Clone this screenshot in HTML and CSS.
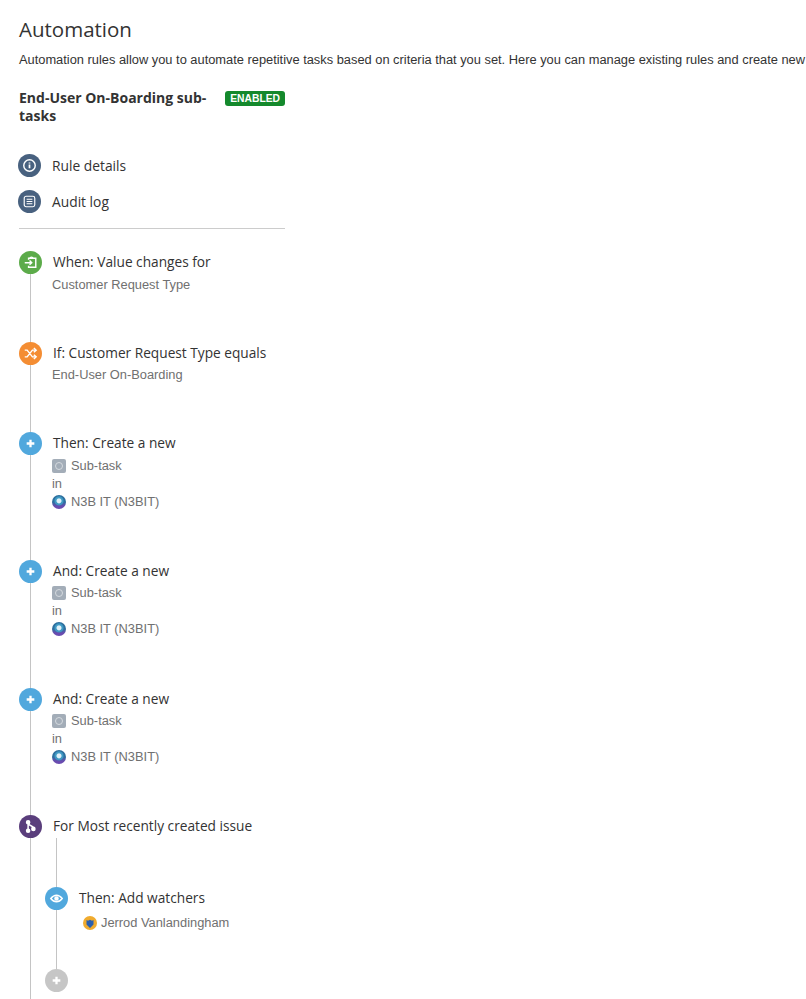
FILE: index.html
```html
<!DOCTYPE html>
<html lang="en">
<head>
    <meta charset="UTF-8">
    <meta name="viewport" content="width=device-width, initial-scale=1.0">
    <title>Automation</title>
    <link rel="stylesheet" href="styles.css">
</head>
<body>
    <!-- Header -->
    <header class="header">
        <h1>Automation</h1>
        <p>Automation rules allow you to automate repetitive tasks based on criteria that you set. Here you can manage existing rules and create new</p>
    </header>

    <div class="sidebar">
        <div class="rule-title">
            <h2>End-User On-Boarding sub-tasks</h2>
            <span class="badge">Enabled</span>
        </div>

        <!-- Rule links -->
        <nav class="links">
            <a href="#details">
                <span class="icon slate">
                    <svg viewBox="0 0 24 24" width="23" height="23" fill="none" stroke="#fff" stroke-width="1.5"><circle cx="12" cy="12" r="6"/><path d="M12 8.800v1M12 11v3.800" stroke-width="1.8"/></svg>
                </span>
                Rule details
            </a>
            <a href="#audit">
                <span class="icon slate">
                    <svg viewBox="0 0 24 24" width="23" height="23" fill="none" stroke="#fff" stroke-width="1.2"><rect x="6.500" y="6.500" width="11" height="11" rx="2"/><path d="M9 9.700h6M9 12h6M9 14.300h6"/></svg>
                </span>
                Audit log
            </a>
        </nav>
    </div>

    <!-- Steps -->
    <div class="steps">
        <div class="step step-short">
            <div class="rail">
                <span class="icon green">
                    <svg viewBox="0 0 24 24" width="23" height="23" fill="none" stroke="#fff" stroke-width="1.5"><path d="M10 9V7.500h7.500v9.500H10v-1.500"/><path d="M6 12.200h7M11 10l2.300 2.200-2.300 2.200"/><path d="M11.500 7.500c0-1.500 3-1.500 3 0"/></svg>
                </span>
                <span class="line"></span>
            </div>
            <div class="step-body">
                <h3>When: Value changes for</h3>
                <p>Customer Request Type</p>
            </div>
        </div>

        <div class="step step-short">
            <div class="rail">
                <span class="icon orange">
                    <svg viewBox="0 0 24 24" width="23" height="23" fill="none" stroke="#fff" stroke-width="1.5"><path d="M6 8.500h2.500l5.500 7h3.500M6 15.500h2.500l5.500-7h3.500"/><path d="M15.500 6.300l2.400 2.200-2.400 2.200M15.500 13.300l2.400 2.200-2.400 2.200"/></svg>
                </span>
                <span class="line"></span>
            </div>
            <div class="step-body">
                <h3>If: Customer Request Type equals</h3>
                <p>End-User On-Boarding</p>
            </div>
        </div>

        <div class="step step-create">
            <div class="rail">
                <span class="icon blue">
                    <svg viewBox="0 0 24 24" width="23" height="23" fill="none" stroke="#fff" stroke-width="2.400"><path d="M12 8v8M8 12h8"/></svg>
                </span>
                <span class="line"></span>
            </div>
            <div class="step-body">
                <h3>Then: Create a new</h3>
                <p class="with-icon"><span class="subtask"><i></i></span>Sub-task</p>
                <p>in</p>
                <p class="with-icon"><span class="project"></span>N3B IT (N3BIT)</p>
            </div>
        </div>

        <div class="step step-create">
            <div class="rail">
                <span class="icon blue">
                    <svg viewBox="0 0 24 24" width="23" height="23" fill="none" stroke="#fff" stroke-width="2.400"><path d="M12 8v8M8 12h8"/></svg>
                </span>
                <span class="line"></span>
            </div>
            <div class="step-body">
                <h3>And: Create a new</h3>
                <p class="with-icon"><span class="subtask"><i></i></span>Sub-task</p>
                <p>in</p>
                <p class="with-icon"><span class="project"></span>N3B IT (N3BIT)</p>
            </div>
        </div>

        <div class="step step-create">
            <div class="rail">
                <span class="icon blue">
                    <svg viewBox="0 0 24 24" width="23" height="23" fill="none" stroke="#fff" stroke-width="2.400"><path d="M12 8v8M8 12h8"/></svg>
                </span>
                <span class="line"></span>
            </div>
            <div class="step-body">
                <h3>And: Create a new</h3>
                <p class="with-icon"><span class="subtask"><i></i></span>Sub-task</p>
                <p>in</p>
                <p class="with-icon"><span class="project"></span>N3B IT (N3BIT)</p>
            </div>
        </div>

        <div class="step step-last">
            <div class="rail">
                <span class="icon purple">
                    <svg viewBox="0 0 24 24" width="23" height="23" fill="none" stroke="#fff" stroke-width="1.600"><path d="M9.500 8v8.500M9.500 8.500c0 3 5.500 2 5.500 5.500"/><circle cx="9.500" cy="7.500" r="1.600" fill="#fff"/><circle cx="9.500" cy="16.500" r="1.600" fill="#fff"/><circle cx="15" cy="14.500" r="1.600" fill="#fff"/></svg>
                </span>
                <span class="line"></span>
            </div>
            <div class="step-body">
                <h3>For Most recently created issue</h3>

                <!-- Nested branch -->
                <div class="branch">
                    <div class="branch-top"></div>
                    <div class="step step-nested">
                        <div class="rail">
                            <span class="icon blue">
                                <svg viewBox="0 0 24 24" width="23" height="23" fill="none" stroke="#fff" stroke-width="1.500"><path d="M6 12c3.500-4.600 8.500-4.600 12 0-3.500 4.600-8.500 4.600-12 0z"/><circle cx="12" cy="12" r="1.600" fill="#fff"/></svg>
                            </span>
                            <span class="line"></span>
                        </div>
                        <div class="step-body">
                            <h3>Then: Add watchers</h3>
                            <p class="with-icon watcher">
                                <svg class="avatar" viewBox="0 0 14 14" width="14" height="14"><circle cx="7" cy="7" r="7" fill="#f0ab2e"/><path d="M3.500 4l1.500.8L7 3.800l2 1 1.500-.8v4.500L7 12 3.500 8.500z" fill="#2a5fae"/></svg>
                                Jerrod Vanlandingham
                            </p>
                        </div>
                    </div>
                    <span class="icon grey">
                        <svg viewBox="0 0 24 24" width="23" height="23" fill="none" stroke="#fff" stroke-width="2.400"><path d="M12 8v8M8 12h8"/></svg>
                    </span>
                </div>
            </div>
        </div>
    </div>
</body>
</html>
```

FILE: styles.css
```css
* {
    margin: 0;
    padding: 0;
    box-sizing: border-box;
}

html, body {
    height: 999px;
    overflow: hidden;
}

body {
    background-color: #fff;
    color: #333;
    font-family: 'Liberation Sans', Arial, sans-serif;
    font-size: 12.850px;
}

/* Header */
.header {
    padding: 17px 0 0 19px;
}

.header h1 {
    font-family: 'Open Sans', sans-serif;
    font-size: 20.500px;
    font-weight: 400;
    line-height: 24px;
}

.header p {
    margin-top: 11px;
    line-height: 16px;
    white-space: nowrap;
}

/* Sidebar */
.sidebar {
    width: 266px;
    margin-left: 19px;
    border-bottom: 1px solid #ccc;
    padding-bottom: 15px;
}

.rule-title {
    display: flex;
    justify-content: space-between;
    align-items: flex-start;
    padding-top: 21px;
}

.rule-title h2 {
    width: 195px;
    font-family: 'Open Sans', sans-serif;
    font-size: 14px;
    font-weight: 700;
    line-height: 18px;
}

.badge {
    margin-top: 2px;
    padding: 0 5px;
    background: #14892c;
    border-radius: 3px;
    color: #fff;
    font-size: 10.300px;
    font-weight: bold;
    line-height: 15px;
    text-transform: uppercase;
}

.links {
    margin: 29px 0 0 -1px;
    display: flex;
    flex-direction: column;
    gap: 13px;
}

.links a {
    display: flex;
    align-items: center;
    gap: 11px;
    color: #333;
    font-family: 'Open Sans', sans-serif;
    font-size: 13.800px;
    text-decoration: none;
}

/* Icons */
.icon {
    display: block;
    flex: none;
    width: 23px;
    height: 23px;
    border-radius: 50%;
}

.icon svg {
    display: block;
}

.slate { background: #48617f; }
.green { background: #5cab4a; }
.orange { background: #f48d33; }
.blue { background: #51a8dd; }
.purple { background: #5a3e7c; }
.grey { background: #c6c6c6; }

/* Steps */
.steps {
    margin: 22px 0 0 19px;
}

.step {
    display: flex;
    gap: 11px;
}

.step-short { height: 90.500px; }
.step-create { height: 127.800px; }
.step-last { height: 184px; }
.step-nested { height: 82px; }

.rail {
    display: flex;
    flex-direction: column;
    align-items: center;
    flex: none;
    width: 23px;
}

.line {
    flex: 1;
    width: 1px;
    background: #c4c4c4;
}

.step-body {
    flex: 1;
}

.step-body h3 {
    font-family: 'Open Sans', sans-serif;
    font-size: 13.700px;
    font-weight: 400;
    line-height: 22px;
}

.step-body p {
    margin-left: -1px;
    color: #707070;
    line-height: 18px;
}

.step-body h3 + p {
    margin-top: 2.500px;
}

.with-icon {
    display: flex;
    align-items: center;
    gap: 5px;
}

.subtask {
    display: flex;
    align-items: center;
    justify-content: center;
    width: 14px;
    height: 14px;
    background: #a3adb8;
    border-radius: 2px;
}

.subtask i {
    display: block;
    width: 8px;
    height: 8px;
    border: 1.500px solid #d5dadf;
    border-radius: 50%;
}

.project {
    width: 14px;
    height: 14px;
    border-radius: 50%;
    background: radial-gradient(circle at 50% 42%, #dff0f8 0 2px, #3f9ac4 3px 4px, transparent 5px), linear-gradient(#2c6f9e 0 50%, #6a4bb0 80%);
}

.step-body p.watcher {
    margin: 5px 0 0 4px;
    gap: 4px;
}

/* Nested branch */
.branch {
    margin-top: 1px;
}

.branch-top {
    width: 1px;
    height: 49px;
    margin-left: 3px;
    background: #c4c4c4;
}

.branch .step-nested {
    margin-left: -8px;
}

.branch .grey {
    margin-left: -8px;
}
```
